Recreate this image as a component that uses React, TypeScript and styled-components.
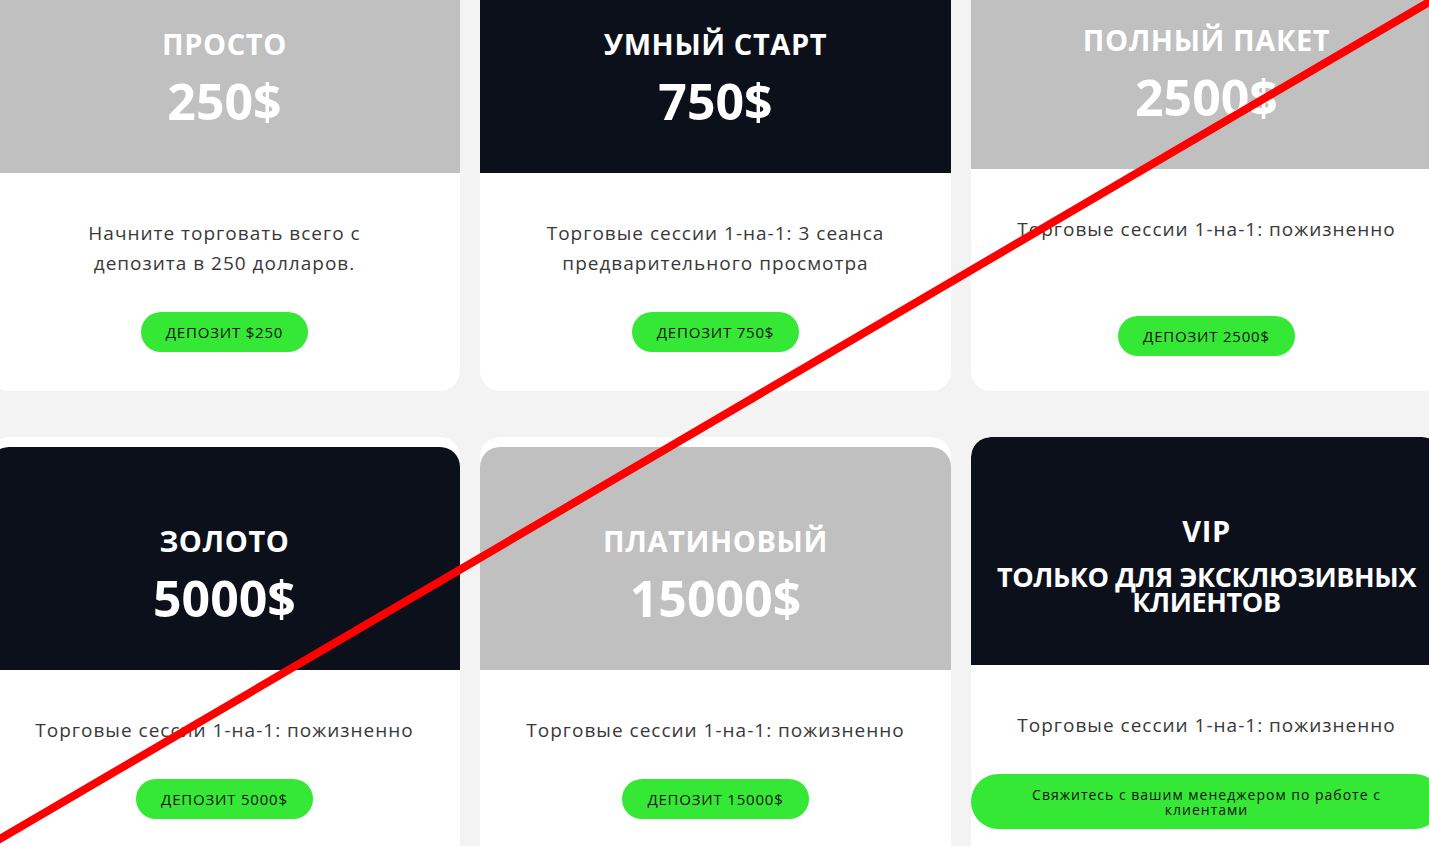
import React from "react";
import styled, { createGlobalStyle, css } from "styled-components";

type Tone = "gray" | "dark";

interface Plan {
  title: string;
  price?: string;
  subtitle?: string;
  text: string;
  button: string;
  tone: Tone;
  headerOffset: number;
  headerHeight: number;
  buttonGap?: number;
  wide?: boolean;
}

const plans: Plan[] = [
  {
    title: "Просто",
    price: "250$",
    text: "Начните торговать всего с\nдепозита в 250 долларов.",
    button: "Депозит $250",
    tone: "gray",
    headerOffset: 10,
    headerHeight: 223,
  },
  {
    title: "Умный старт",
    price: "750$",
    text: "Торговые сессии 1-на-1: 3 сеанса\nпредварительного просмотра",
    button: "Депозит 750$",
    tone: "dark",
    headerOffset: 10,
    headerHeight: 223,
  },
  {
    title: "Полный пакет",
    price: "2500$",
    text: "Торговые сессии 1-на-1: пожизненно",
    button: "Депозит 2500$",
    tone: "gray",
    headerOffset: 6,
    headerHeight: 223,
    buttonGap: 72,
  },
  {
    title: "Золото",
    price: "5000$",
    text: "Торговые сессии 1-на-1: пожизненно",
    button: "Депозит 5000$",
    tone: "dark",
    headerOffset: 10,
    headerHeight: 223,
  },
  {
    title: "Платиновый",
    price: "15000$",
    text: "Торговые сессии 1-на-1: пожизненно",
    button: "Депозит 15000$",
    tone: "gray",
    headerOffset: 10,
    headerHeight: 223,
  },
  {
    title: "VIP",
    subtitle: "Только для эксклюзивных клиентов",
    text: "Торговые сессии 1-на-1: пожизненно",
    button: "Свяжитесь с вашим менеджером по работе с клиентами",
    tone: "dark",
    headerOffset: 0,
    headerHeight: 228,
    wide: true,
  },
];

const App: React.FC = () => {
  return (
    <Page>
      <GlobalStyle />
      <Grid>
        {plans.map((plan, idx) => (
          <Card key={idx}>
            <Header
              $tone={plan.tone}
              $offset={plan.headerOffset}
              $height={plan.headerHeight}
            >
              <Title>{plan.title}</Title>
              {plan.price && <Price>{plan.price}</Price>}
              {plan.subtitle && <Subtitle>{plan.subtitle}</Subtitle>}
            </Header>
            <Body>
              <Text>{plan.text}</Text>
              <DepositButton $gap={plan.buttonGap ?? 34} $wide={plan.wide}>
                {plan.button}
              </DepositButton>
            </Body>
          </Card>
        ))}
      </Grid>
      <Strike viewBox="0 0 1429 846" width="1429" height="846">
        <line
          x1="-20"
          y1="850.7"
          x2="1450"
          y2="-10.3"
          stroke="#ff0000"
          strokeWidth="8"
        />
      </Strike>
    </Page>
  );
};
export default App;

const GlobalStyle = createGlobalStyle`
  html, body {
    margin: 0;
    padding: 0;
    background: #f3f3f3;
    overflow: hidden;
  }
  body {
    font-family: "Open Sans", "Noto Sans", sans-serif;
  }
`;

const Page = styled.div`
  position: relative;
  width: 1429px;
  height: 846px;
  overflow: hidden;
  background: #f3f3f3;
`;

const Grid = styled.div`
  display: grid;
  grid-template-columns: repeat(3, 471px);
  grid-auto-rows: 451px;
  column-gap: 20px;
  row-gap: 46px;
  margin: -60px 0 0 -11px;
`;

const Card = styled.div`
  display: flex;
  flex-direction: column;
  background: #ffffff;
  border-radius: 20px;
  overflow: hidden;
`;

const Header = styled.div<{ $tone: Tone; $offset: number; $height: number }>`
  flex: none;
  box-sizing: border-box;
  margin-top: ${(p) => p.$offset}px;
  height: ${(p) => p.$height}px;
  padding-top: 77px;
  border-radius: 20px 20px 0 0;
  background: ${(p) => (p.$tone === "dark" ? "#0c101b" : "#c0c0c0")};
  color: #ffffff;
  text-align: center;
`;

const Title = styled.div`
  font-size: 29px;
  line-height: 34px;
  font-weight: 700;
  text-transform: uppercase;
  letter-spacing: 0.6px;
`;

const Price = styled.div`
  margin-top: 10px;
  font-size: 50px;
  line-height: 60px;
  font-weight: 700;
  letter-spacing: 0;
`;

const Subtitle = styled.div`
  margin-top: 16px;
  font-size: 27px;
  line-height: 25px;
  font-weight: 700;
  text-transform: uppercase;
  letter-spacing: -0.4px;
`;

const Body = styled.div`
  display: flex;
  flex-direction: column;
  align-items: center;
  padding-top: 45px;
  text-align: center;
`;

const Text = styled.p`
  margin: 0;
  font-size: 19px;
  line-height: 30px;
  color: #383838;
  white-space: pre-line;
  letter-spacing: 1px;
`;

const DepositButton = styled.button<{ $gap: number; $wide?: boolean }>`
  margin-top: ${(p) => p.$gap}px;
  height: 40px;
  padding: 0 25px;
  border: none;
  border-radius: 20px;
  background: #35e835;
  color: #111111;
  font-family: "Open Sans", "Noto Sans", sans-serif;
  font-size: 15px;
  letter-spacing: 0.8px;
  text-transform: uppercase;
  cursor: pointer;
  ${(p) =>
    p.$wide &&
    css`
      align-self: stretch;
      height: 55px;
      padding: 0 50px;
      border-radius: 28px;
      font-size: 14px;
      line-height: 15px;
      letter-spacing: 1px;
      text-transform: none;
    `}
`;

const Strike = styled.svg`
  position: absolute;
  left: 0;
  top: 0;
  pointer-events: none;
`;
